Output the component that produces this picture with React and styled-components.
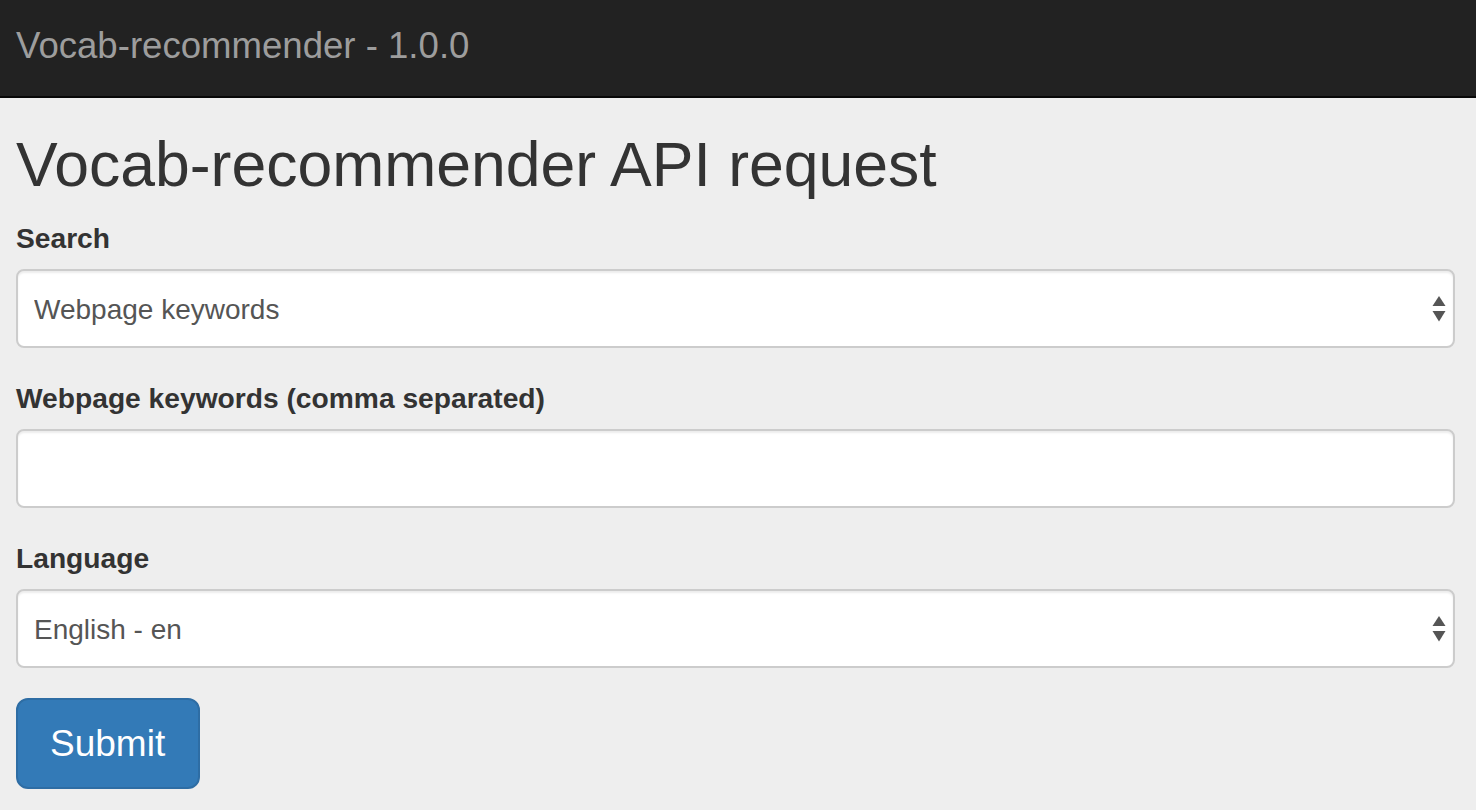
import React from "react";
import styled, { createGlobalStyle } from "styled-components";

const Global = createGlobalStyle`
  html, body { margin: 0; padding: 0; background: #eeeeee; }
  body { font-family: "Liberation Sans", Arial, Helvetica, sans-serif; color: #333; }
  * { box-sizing: border-box; }
`;

const Navbar = styled.header`
  height: 98px;
  background: #222222;
  border-bottom: 2px solid #080808;
  padding: 26px 16px 0;
`;

const Brand = styled.div`
  font-size: 36.6px;
  line-height: 40px;
  color: #9d9d9d;
`;

const Container = styled.main`
  padding: 0 21px 0 16px;
`;

const Title = styled.h1`
  margin: 33px 0 21px;
  font-size: 62.5px;
  line-height: 66px;
  font-weight: 500;
  color: #333;
`;

const Group = styled.div`
  margin-bottom: 30px;
`;

const Label = styled.label`
  display: block;
  font-size: 28.2px;
  line-height: 40px;
  font-weight: 700;
  margin-bottom: 11px;
  color: #333;
`;

const fieldStyles = `
  display: block;
  width: 100%;
  height: 79px;
  padding: 2px 16px 0;
  font-family: "Liberation Sans", Arial, Helvetica, sans-serif;
  font-size: 28px;
  color: #555;
  background: #fff;
  border: 2px solid #cccccc;
  border-radius: 8px;
  box-shadow: inset 0 2px 2px rgba(0,0,0,0.075);
  outline: none;
`;

const Input = styled.input`
  ${fieldStyles}
`;

const SelectWrap = styled.div`
  position: relative;
`;

const Select = styled.select`
  ${fieldStyles}
  appearance: none;
  -webkit-appearance: none;
  padding-right: 48px;
`;

const Arrows = styled.svg`
  position: absolute;
  right: 9px;
  top: 50%;
  transform: translateY(-50%);
  pointer-events: none;
`;

const Button = styled.button`
  display: inline-block;
  font-family: "Liberation Sans", Arial, Helvetica, sans-serif;
  font-size: 37px;
  line-height: 47px;
  padding: 20px 33px 20px 32px;
  color: #fff;
  background: #337ab7;
  border: 2px solid #2e6da4;
  border-radius: 12px;
  cursor: pointer;
`;

function SelectField({ value, options }) {
  return (
    <SelectWrap>
      <Select defaultValue={value}>
        {options.map((o) => (
          <option key={o}>{o}</option>
        ))}
      </Select>
      <Arrows width="14" height="26" viewBox="0 0 14 26">
        <polygon points="7,0 13.5,10 0.5,10" fill="#555" />
        <polygon points="0.5,15 13.5,15 7,25.5" fill="#555" />
      </Arrows>
    </SelectWrap>
  );
}

export default function App() {
  return (
    <>
      <Global />
      <Navbar>
        <Brand>Vocab-recommender - 1.0.0</Brand>
      </Navbar>
      <Container>
        <Title>Vocab-recommender API request</Title>
        <Group>
          <Label>Search</Label>
          <SelectField value="Webpage keywords" options={["Webpage keywords", "Text", "URL"]} />
        </Group>
        <Group>
          <Label>Webpage keywords (comma separated)</Label>
          <Input type="text" />
        </Group>
        <Group>
          <Label>Language</Label>
          <SelectField value="English - en" options={["English - en", "French - fr", "German - de"]} />
        </Group>
        <Button type="button">Submit</Button>
      </Container>
    </>
  );
}
